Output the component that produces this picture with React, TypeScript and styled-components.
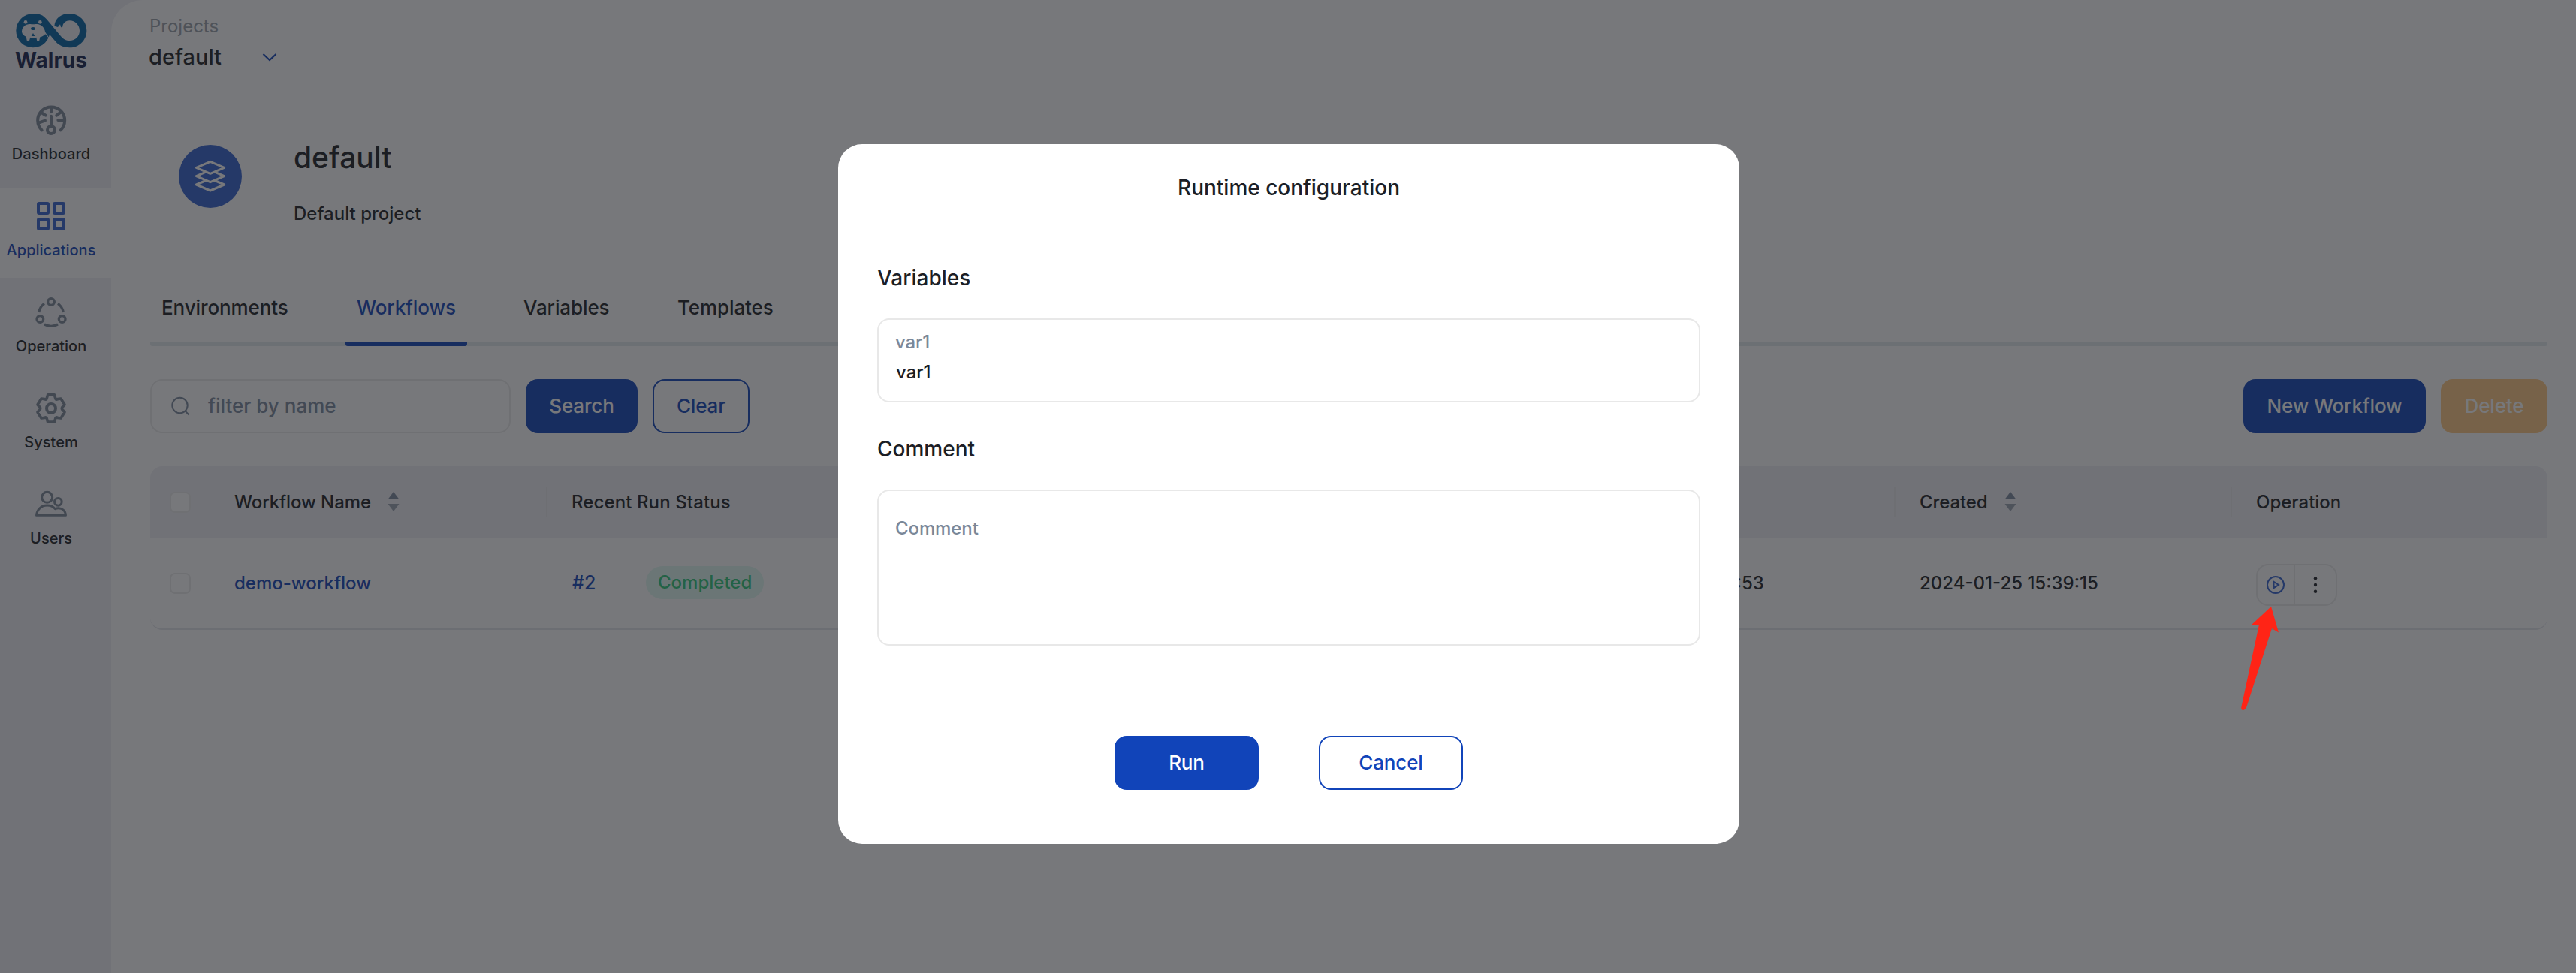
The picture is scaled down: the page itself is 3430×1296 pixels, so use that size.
import React from "react";
import styled, { createGlobalStyle, css } from "styled-components";

const ink = "#1c1e25";
const blue = "#1144b9";
const line = "#ebebeb";

const GlobalStyle = createGlobalStyle`
  * { box-sizing: border-box; }
  body { margin: 0; font-family: Inter, "Liberation Sans", sans-serif; font-weight: 450; color: ${ink}; background: #fff; }
  svg { display: block; flex: none; }
`;

const Screen = styled.div`
  position: relative;
  display: flex;
  width: 3430px;
  height: 1296px;
  overflow: hidden;
  background: #f0f0f5;
`;

/* Sidebar */
const Sidebar = styled.nav`
  width: 148px;
  flex: none;
  display: flex;
  flex-direction: column;
`;
const Brand = styled.div`
  height: 122px;
  padding: 17px 12px 0 0;
  display: flex;
  flex-direction: column;
  align-items: center;
`;
const BrandName = styled.div`
  font-size: 28px;
  font-weight: 700;
  line-height: 32px;
  color: #14224c;
`;
const NavItem = styled.div<{ $active?: boolean }>`
  height: 120px;
  margin-bottom: 8px;
  padding: 16px 12px 0 0;
  display: flex;
  flex-direction: column;
  align-items: center;
  gap: 9px;
  color: ${p => (p.$active ? "#3261cf" : "#7a8797")};
  background: ${p => (p.$active ? "#fff" : "transparent")};
`;
const NavLabel = styled.span<{ $active?: boolean }>`
  font-size: 20px;
  line-height: 28px;
  color: ${p => (p.$active ? blue : ink)};
`;

/* Main area */
const Main = styled.main`
  flex: 1;
  min-width: 0;
  padding: 0 38px 0 52px;
  border-top-left-radius: 42px;
  background: #fff;
`;
const Crumb = styled.header`
  height: 192px;
  padding-top: 21px;
`;
const CrumbTitle = styled.div`
  margin-left: -1px;
  font-size: 24px;
  font-weight: 400;
  line-height: 28px;
  color: #99a0a9;
`;
const ProjectPicker = styled.div`
  display: flex;
  align-items: center;
  gap: 54px;
  height: 52px;
  margin: 1px 0 0 -2px;
  font-size: 29px;
  line-height: 52px;
`;
const Summary = styled.section`
  display: flex;
  gap: 71px;
  height: 186px;
  padding-left: 38px;
`;
const Avatar = styled.div`
  display: flex;
  align-items: center;
  justify-content: center;
  width: 84px;
  height: 84px;
  margin-top: 1px;
  border-radius: 50%;
  background: #3261cf;
  color: #fff;
`;
const ProjectName = styled.h1`
  margin: -6px 0 0 -2px;
  font-size: 39px;
  font-weight: 450;
  line-height: 48px;
`;
const ProjectText = styled.p`
  margin: 36px 0 0 -2px;
  font-size: 24px;
  line-height: 30px;
`;
const Tabs = styled.div`
  display: flex;
  gap: 60px;
  height: 83px;
  border-radius: 3px;
  background: linear-gradient(#e4ebee, #e4ebee) bottom / 100% 6px no-repeat;
`;
const Tab = styled.div<{ $active?: boolean; $width: number }>`
  width: ${p => p.$width}px;
  padding: 15px 0 0 15px;
  font-size: 26px;
  line-height: 34px;
  letter-spacing: -0.1px;
  border-radius: 3px;
  white-space: nowrap;
  ${p =>
    p.$active &&
    css`
      color: ${blue};
      background: linear-gradient(${blue}, ${blue}) bottom / 100% 6px no-repeat;
    `}
`;
const Toolbar = styled.div`
  display: flex;
  gap: 20px;
  margin: 44px 0;
`;
const SearchBox = styled.div`
  display: flex;
  align-items: center;
  gap: 24px;
  width: 480px;
  height: 72px;
  padding: 0 0 1px 25px;
  border: 2px solid ${line};
  border-radius: 16px;
  font-size: 26px;
  color: #7b899d;
`;
const Button = styled.button<{ $kind?: "solid" | "outline" | "danger"; $width: number }>`
  width: ${p => p.$width}px;
  height: 72px;
  padding: 0 0 1px;
  border: 2px solid ${p => (p.$kind === "danger" ? "#ffc882" : blue)};
  border-radius: 16px;
  background: ${p => (p.$kind === "outline" ? "transparent" : p.$kind === "danger" ? "#ffc882" : blue)};
  color: ${p => (p.$kind === "outline" ? blue : "#fff")};
  font: 450 26px Inter, "Liberation Sans", sans-serif;
  letter-spacing: -0.15px;
`;
const Spacer = styled.div`
  flex: 1;
`;

/* Table */
const Row = styled.div<{ $head?: boolean }>`
  display: grid;
  grid-template-columns: 80px 449px 1345px 450px 448px 420px;
  align-items: center;
  font-size: 24px;
  ${p =>
    p.$head
      ? css`
          height: 96px;
          border-radius: 16px 16px 0 0;
          background: #f0f0f5;
        `
      : css`
          height: 122px;
          border-bottom: 2px solid #e4e5ea;
          border-radius: 0 0 16px 16px;
        `}
`;
const Cell = styled.div<{ $divider?: boolean; $link?: boolean; $spacing?: number }>`
  display: flex;
  align-items: center;
  height: 40px;
  padding-left: 32px;
  padding-bottom: 2px;
  white-space: nowrap;
  letter-spacing: ${p => p.$spacing ?? 0}px;
  color: ${p => (p.$link ? blue : ink)};
  border-right: ${p => (p.$divider ? "2px solid #e9e9ec" : "0")};
`;
const Checkbox = styled.span`
  width: 28px;
  height: 28px;
  margin-left: 26px;
  border: 2px solid ${line};
  border-radius: 7px;
  background: #fff;
`;
const RunNumber = styled.span`
  width: 99px;
  padding-left: 1px;
  font-size: 25px;
  color: ${blue};
`;
const Pill = styled.span`
  height: 44px;
  padding: 0 16px;
  border-radius: 22px;
  background: #e1faf2;
  color: #2fc87c;
  line-height: 43px;
`;
const Actions = styled.div`
  display: flex;
  height: 56px;
  width: 108px;
  margin-top: 5px;
  border: 2px solid ${line};
  border-radius: 16px;
`;
const Action = styled.div<{ $first?: boolean }>`
  display: flex;
  align-items: center;
  justify-content: center;
  flex: ${p => (p.$first ? "0 0 50px" : "1")};
  border-right: ${p => (p.$first ? `2px solid ${line}` : "0")};
  color: ${p => (p.$first ? "#3261cf" : ink)};
`;

/* Dialog */
const Mask = styled.div`
  position: absolute;
  inset: 0;
  display: flex;
  justify-content: center;
  align-items: flex-start;
  padding-top: 192px;
  padding-left: 2px;
  background: rgba(28, 30, 35, 0.6);
`;
const Dialog = styled.div`
  display: flex;
  flex-direction: column;
  width: 1200px;
  height: 932px;
  padding: 40px 52px 72px;
  border-radius: 32px;
  background: #fff;
`;
const DialogTitle = styled.h2`
  margin: 0 0 84px;
  text-align: center;
  font-size: 28px;
  font-weight: 450;
  line-height: 36px;
`;
const Label = styled.h3`
  margin: 0 0 36px;
  font-size: 28px;
  font-weight: 450;
  line-height: 36px;
`;
const Field = styled.div<{ $height: number; $pad: number }>`
  display: flex;
  flex-direction: column;
  height: ${p => p.$height}px;
  padding: ${p => p.$pad}px 22px 0;
  border: 2px solid #e8e8e8;
  border-radius: 16px;
  font-size: 24px;
  line-height: 40px;
`;
const Hint = styled.span`
  color: #7b8899;
  letter-spacing: -0.1px;
`;
const Value = styled.span`
  padding-left: 1px;
`;
const Footer = styled.div`
  display: flex;
  justify-content: center;
  gap: 80px;
  margin-top: auto;
`;
const Gap = styled.div`
  height: 44px;
`;
const Pointer = styled.svg`
  position: absolute;
  left: 2980px;
  top: 804px;
`;

const Logo = () => (
  <svg width="96" height="47" viewBox="60 51 288 141">
    <g fill="#0262a4">
      <circle cx="132" cy="122" r="68" />
      <path d="M140 54 C166 55 178 67 190 81 L240 141 C252 157 264 162 278 162 C301 162 318 144 318 122 C318 100 300 82 278 82 C263 82 251 90 249 110 L243 108 L240 97 L231 108 L217 104 C219 72 245 54 278 54 C316 54 346 84 346 122 C346 160 316 190 278 190 C252 190 234 180 222 166 L150 82 Z" />
    </g>
    <g fill="#f0f0f5">
      <path d="M87 125 C88 108 102 95 121 96 Q132 98 143 96 C163 93 178 110 180 126 L183 132 L194 148 L206 146 L196 154 L181 136 C176 141 168 147 160 148 L156 165 H148 L145 149 Q132 157 121 149 L116 165 H108 L104 146 C94 142 87 134 87 125 Z" />
      <circle cx="102" cy="88" r="7" />
      <circle cx="160" cy="88" r="7" />
    </g>
    <g fill="#0262a4">
      <ellipse cx="132" cy="114" rx="9" ry="6" />
      <path d="M132 132 L139 144 H125 Z" />
    </g>
  </svg>
);

const DashboardIcon = () => (
  <svg width="44" height="44" viewBox="138 414 132 132" fill="none" stroke="currentColor" strokeWidth="12" strokeLinecap="round">
    <path d="M167 520 A54 54 0 1 1 242 520" />
    <path d="M204 464 V502 M204 429 V448 M165 450 L182 461 M243 448 L226 461 M154 491 L180 482 M232 480 H254" />
    <circle cx="204" cy="519" r="15" />
  </svg>
);
const AppsIcon = () => (
  <svg width="44" height="44" viewBox="138 798 132 132" fill="none" stroke="currentColor" strokeWidth="12">
    {[153, 216].map(x => [813, 876].map(y => <rect key={`${x}-${y}`} x={x} y={y} width="39" height="39" rx="3" />))}
  </svg>
);
const OperationIcon = () => (
  <svg width="44" height="44" viewBox="138 72 132 132" fill="none" stroke="currentColor" strokeWidth="10">
    <circle cx="204" cy="96" r="13" />
    <circle cx="160" cy="165" r="13" />
    <circle cx="248" cy="165" r="13" />
    <path d="M177 103 Q159 115 155 138 M231 103 Q249 115 253 138 M177 186 Q204 200 231 186" />
  </svg>
);
const SystemIcon = () => (
  <svg width="44" height="44" viewBox="138 456 132 132" fill="none" stroke="currentColor" strokeWidth="11" strokeLinejoin="round">
    <path d="M191 467.500 H217 L222 484 Q225 488 230 485 L243 483 L258 507 L248 518 Q246 522 248 526 L258 537 L243 561 L230 559 Q225 556 222 560 L217 576.500 H191 L186 560 Q183 556 178 559 L165 561 L150 537 L160 526 Q162 522 160 518 L150 507 L165 483 L178 485 Q183 488 186 484 Z" />
    <circle cx="204" cy="522" r="18" strokeWidth="12" />
  </svg>
);
const UsersIcon = () => (
  <svg width="44" height="44" viewBox="138 840 132 132" fill="none" stroke="currentColor" strokeWidth="9" strokeLinejoin="round">
    <circle cx="188" cy="877" r="21" />
    <circle cx="232" cy="895" r="14.500" />
    <path d="M145.500 949 H262.500 C261 930 248 920 233 920 Q226 920 220 923 C211 912 200 909 188 909 C165 909 147 926 145.500 949 Z" />
  </svg>
);
const LayersIcon = () => (
  <svg width="44" height="44" viewBox="774 641 132 132" fill="#3261cf" stroke="currentColor" strokeWidth="9" strokeLinejoin="round">
    {[740, 706, 672].map(y => (
      <path key={y} d={`M840 ${y - 24} L896 ${y} L840 ${y + 24} L784 ${y} Z`} />
    ))}
  </svg>
);
const Chevron = () => (
  <svg width="20" height="12" viewBox="0 0 20 12" fill="none" stroke={blue} strokeWidth="2.200">
    <path d="M1.500 2 L10 10 L18.500 2" />
  </svg>
);
const SearchIcon = () => (
  <svg width="26" height="26" viewBox="0 0 26 26" fill="none" stroke="#7b899d" strokeWidth="2">
    <circle cx="12.500" cy="12" r="10.200" />
    <path d="M19.500 19.500 L24.500 24.500" />
  </svg>
);
const SortIcon = styled.span`
  display: grid;
  gap: 6px;
  margin-left: 22px;
`;
const Sort = () => (
  <SortIcon>
    <svg width="16" height="10" viewBox="0 0 16 10" fill="#7b899d"><path d="M8 0 L15.500 10 H0.500 Z" /></svg>
    <svg width="16" height="10" viewBox="0 0 16 10" fill="#9aa3b0"><path d="M0.500 0 H15.500 L8 10 Z" /></svg>
  </SortIcon>
);
const PlayIcon = () => (
  <svg width="24" height="24" viewBox="0 0 24 24" fill="none" stroke="currentColor" strokeWidth="2">
    <circle cx="12" cy="12" r="11" />
    <path d="M9.500 7.800 L16 12 L9.500 16.200 Z" />
  </svg>
);
const DotsIcon = () => (
  <svg width="6" height="24" viewBox="0 0 6 24" fill="currentColor">
    {[3.2, 12, 20.8].map(y => <circle key={y} cx="3" cy={y} r="2.200" />)}
  </svg>
);

const nav = [
  { label: "Dashboard", icon: <DashboardIcon /> },
  { label: "Applications", icon: <AppsIcon />, active: true },
  { label: "Operation", icon: <OperationIcon /> },
  { label: "System", icon: <SystemIcon /> },
  { label: "Users", icon: <UsersIcon /> },
];
const tabs = [
  { label: "Environments", width: 200 },
  { label: "Workflows", width: 162, active: true },
  { label: "Variables", width: 145 },
  { label: "Templates", width: 160 },
];

export default function App() {
  return (
    <Screen>
      <GlobalStyle />
      <Sidebar>
        <Brand>
          <Logo />
          <BrandName>Walrus</BrandName>
        </Brand>
        {nav.map(n => (
          <NavItem key={n.label} $active={n.active}>
            {n.icon}
            <NavLabel $active={n.active}>{n.label}</NavLabel>
          </NavItem>
        ))}
      </Sidebar>
      <Main>
        <Crumb>
          <CrumbTitle>Projects</CrumbTitle>
          <ProjectPicker>
            default
            <Chevron />
          </ProjectPicker>
        </Crumb>
        <Summary>
          <Avatar>
            <LayersIcon />
          </Avatar>
          <div>
            <ProjectName>default</ProjectName>
            <ProjectText>Default project</ProjectText>
          </div>
        </Summary>
        <Tabs>
          {tabs.map(t => (
            <Tab key={t.label} $active={t.active} $width={t.width}>{t.label}</Tab>
          ))}
        </Tabs>
        <Toolbar>
          <SearchBox>
            <SearchIcon />
            filter by name
          </SearchBox>
          <Button $width={149}>Search</Button>
          <Button $kind="outline" $width={129}>Clear</Button>
          <Spacer />
          <Button $width={243}>New Workflow</Button>
          <Button $kind="danger" $width={142}>Delete</Button>
        </Toolbar>
        <Row $head>
          <Checkbox />
          <Cell $divider $spacing={-0.1}>Workflow Name<Sort /></Cell>
          <Cell $spacing={0.1}>Recent Run Status</Cell>
          <Cell $divider />
          <Cell $divider $spacing={-0.1}>Created<Sort /></Cell>
          <Cell>Operation</Cell>
        </Row>
        <Row>
          <Checkbox />
          <Cell $link>demo-workflow</Cell>
          <Cell>
            <RunNumber>#2</RunNumber>
            <Pill>Completed</Pill>
          </Cell>
          <Cell>2024-01-25 15:39:53</Cell>
          <Cell>2024-01-25 15:39:15</Cell>
          <Cell>
            <Actions>
              <Action $first><PlayIcon /></Action>
              <Action><DotsIcon /></Action>
            </Actions>
          </Cell>
        </Row>
      </Main>
      <Mask>
        <Dialog>
          <DialogTitle>Runtime configuration</DialogTitle>
          <Label>Variables</Label>
          <Field $height={112} $pad={10}>
            <Hint>var1</Hint>
            <Value>var1</Value>
          </Field>
          <Gap />
          <Label>Comment</Label>
          <Field $height={208} $pad={30}>
            <Hint>Comment</Hint>
          </Field>
          <Footer>
            <Button $width={192}>Run</Button>
            <Button $kind="outline" $width={192}>Cancel</Button>
          </Footer>
        </Dialog>
      </Mask>
      <Pointer width="60" height="144" viewBox="0 0 60 144" fill="#ff2416">
        <path d="M44 4 L54 38.500 L45 33 L11.500 137 Q9 142.500 6 142 Q3.500 141 4.500 137 L28 28 L17 29 Z" />
      </Pointer>
    </Screen>
  );
}
